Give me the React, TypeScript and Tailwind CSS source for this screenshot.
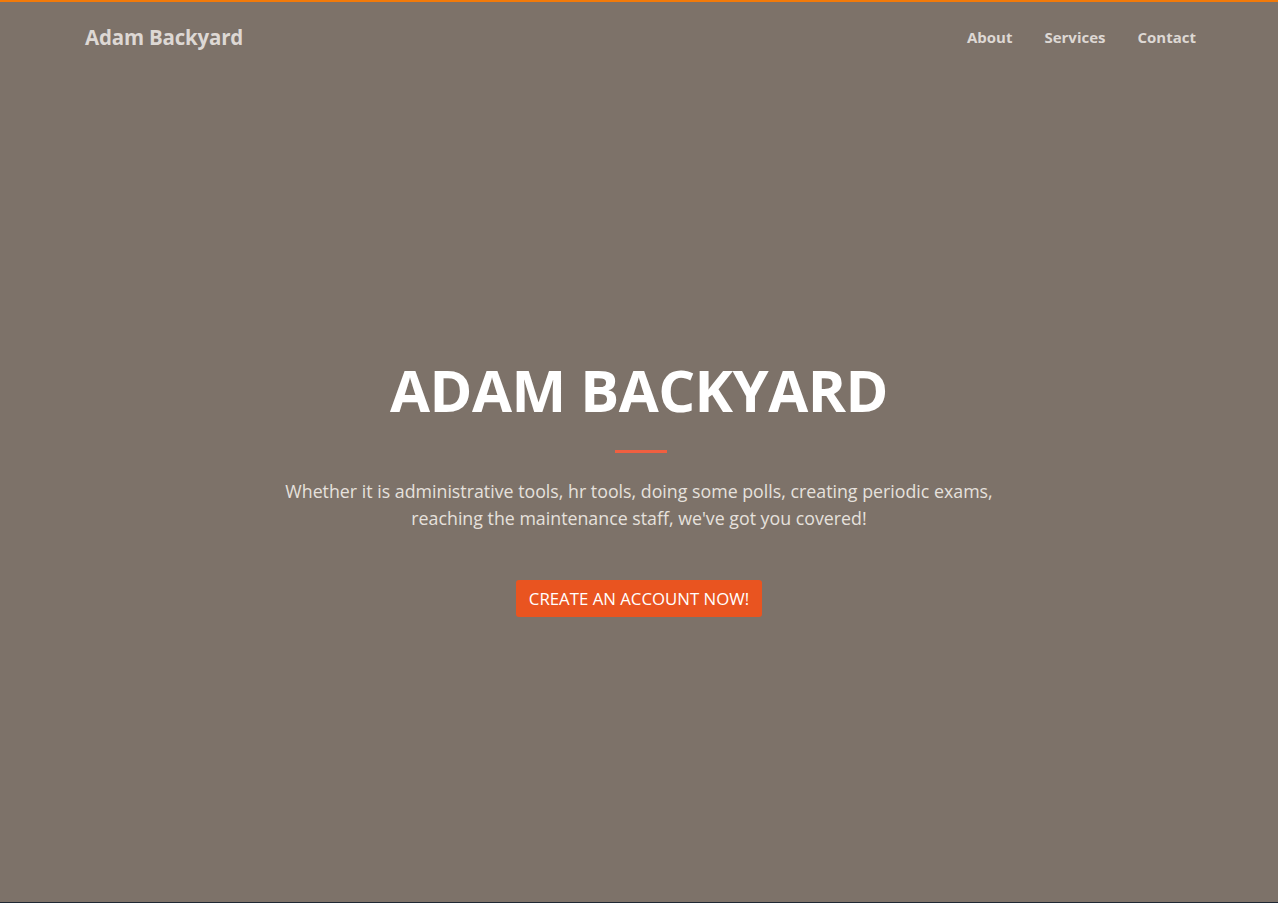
export default function App() {
  return (
    <div
      className="min-h-[903px] flex flex-col bg-[#7d7269] border-t-2 border-[#f27a0a] border-b border-b-[#1f2733]"
      style={{ fontFamily: '"Open Sans", "Noto Sans", sans-serif' }}
    >
      {/* Nav */}
      <nav className="flex items-center justify-between h-[71px] pl-[85px] pr-[82px]">
        <a className="text-[20.5px] font-bold text-[#ddd8d4] tracking-[-0.2px]">Adam Backyard</a>
        <ul className="flex items-center gap-8 text-[15px] font-bold text-[#ddd8d4]">
          <li>About</li>
          <li>Services</li>
          <li>Contact</li>
        </ul>
      </nav>

      {/* Hero */}
      <section className="flex-1 flex flex-col items-center text-center pt-[281px]">
        <h1 className="text-[58px] leading-[72px] font-bold text-white tracking-[-0.5px]">ADAM BACKYARD</h1>
        <hr className="w-[52px] border-0 h-[3px] bg-[#f05f40] mt-[24px] mb-[25px] ml-1" />
        <p className="text-[17.8px] leading-[27px] text-[#e6e1dd] max-w-[760px]">
          Whether it is administrative tools, hr tools, doing some polls, creating periodic exams,
          <br />
          reaching the maintenance staff, we've got you covered!
        </p>
        <button className="mt-[48px] h-[37px] w-[246px] rounded-[3px] bg-[#e95420] text-white text-[16.8px] uppercase">
          Create an account now!
        </button>
      </section>
    </div>
  );
}
